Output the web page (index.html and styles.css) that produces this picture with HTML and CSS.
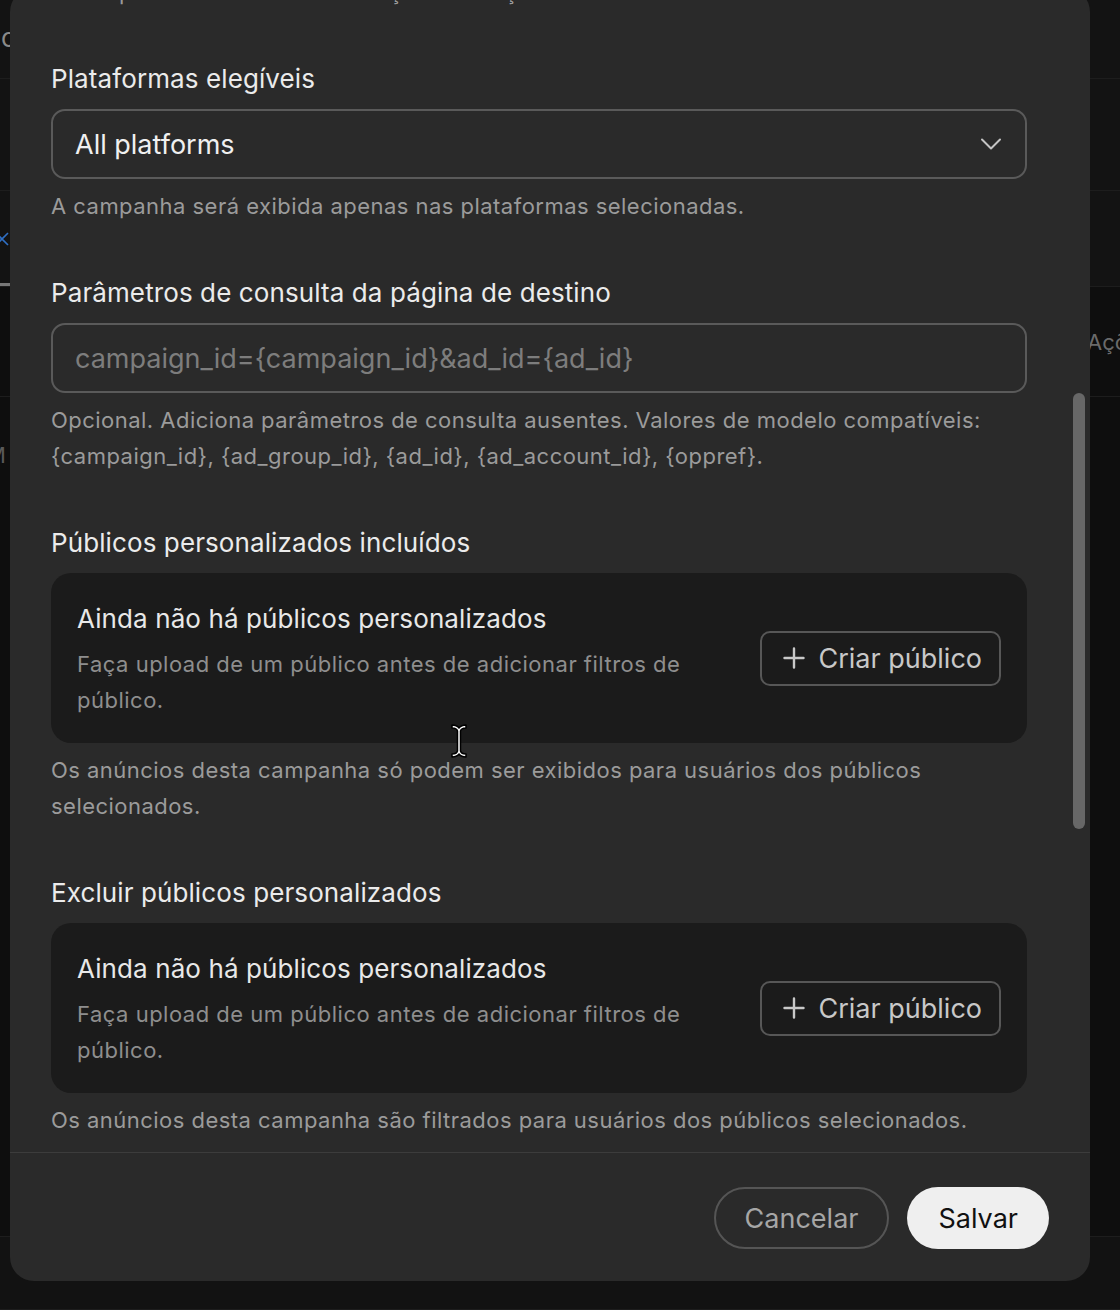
FILE: index.html
```html
<!DOCTYPE html>
<html lang="pt-BR">
<head>
<meta charset="utf-8">
<title>Editar campanha</title>
<link rel="stylesheet" href="styles.css">
</head>
<body>
<div class="page">
  <div class="bg-row bg-row-a">
    <span class="bg-text bg-left">do</span>
  </div>
  <div class="bg-row bg-row-b"></div>
  <div class="bg-row bg-row-c">
    <svg class="bg-x" width="16" height="16" viewBox="0 0 16 16"><path d="M2 2 L14 14 M14 2 L2 14" stroke="#2f6fc4" stroke-width="1.6" fill="none"/></svg>
    <span class="bg-tab"></span>
  </div>
  <div class="bg-row bg-row-d">
    <span class="bg-text bg-right">Ações</span>
  </div>
  <div class="bg-row bg-row-e">
    <span class="bg-text bg-left-m">M</span>
  </div>
  <div class="bg-row bg-row-f"></div>
</div>

<div class="modal">
  <div class="modal-body">
    <p class="help cut">A campanha tem limite de exibição e duração.</p>

    <section class="field">
      <label class="label">Plataformas elegíveis</label>
      <div class="select">
        <span class="select-value">All platforms</span>
        <svg class="chevron" width="22" height="14" viewBox="0 0 22 14"><path d="M2 2.5 L11 11.5 L20 2.5" stroke="#c4c4c4" stroke-width="2" fill="none" stroke-linecap="round" stroke-linejoin="round"/></svg>
      </div>
      <p class="help">A campanha será exibida apenas nas plataformas selecionadas.</p>
    </section>

    <section class="field">
      <label class="label">Parâmetros de consulta da página de destino</label>
      <div class="input"><span class="placeholder">campaign_id={campaign_id}&amp;ad_id={ad_id}</span></div>
      <p class="help">Opcional. Adiciona parâmetros de consulta ausentes. Valores de modelo compatíveis: {campaign_id}, {ad_group_id}, {ad_id}, {ad_account_id}, {oppref}.</p>
    </section>

    <section class="field">
      <label class="label">Públicos personalizados incluídos</label>
      <div class="card">
        <div class="card-text">
          <div class="card-title">Ainda não há públicos personalizados</div>
          <div class="card-desc">Faça upload de um público antes de adicionar filtros de público.</div>
        </div>
        <button class="btn-outline">
          <svg class="plus" width="22" height="22" viewBox="0 0 22 22"><path d="M11 1.5 V20.5 M1.5 11 H20.5" stroke="#c8c8c8" stroke-width="2.4" fill="none" stroke-linecap="round"/></svg>
          <span>Criar público</span>
        </button>
      </div>
      <p class="help">Os anúncios desta campanha só podem ser exibidos para usuários dos públicos selecionados.</p>
    </section>

    <section class="field">
      <label class="label">Excluir públicos personalizados</label>
      <div class="card">
        <div class="card-text">
          <div class="card-title">Ainda não há públicos personalizados</div>
          <div class="card-desc">Faça upload de um público antes de adicionar filtros de público.</div>
        </div>
        <button class="btn-outline">
          <svg class="plus" width="22" height="22" viewBox="0 0 22 22"><path d="M11 1.5 V20.5 M1.5 11 H20.5" stroke="#c8c8c8" stroke-width="2.4" fill="none" stroke-linecap="round"/></svg>
          <span>Criar público</span>
        </button>
      </div>
      <p class="help">Os anúncios desta campanha são filtrados para usuários dos públicos selecionados.</p>
    </section>
  </div>
  <div class="scrollbar"></div>
  <footer class="modal-footer">
    <button class="btn-cancel">Cancelar</button>
    <button class="btn-save">Salvar</button>
  </footer>
</div>

<svg class="cursor" width="18" height="36" viewBox="0 0 18 36">
  <path d="M2 2 C5 2 7.5 3 9 5 C10.5 3 13 2 16 2 V5 C13.5 5 11 6 10.5 8 V28 C11 30 13.5 31 16 31 V34 C13 34 10.5 33 9 31 C7.5 33 5 34 2 34 V31 C4.5 31 7 30 7.5 28 V8 C7 6 4.5 5 2 5 Z" fill="#ffffff" stroke="#000000" stroke-width="1.5" stroke-linejoin="round"/>
</svg>
</body>
</html>
```

FILE: styles.css
```css
* {
  box-sizing: border-box;
}

html, body {
  margin: 0;
  padding: 0;
}

body {
  width: 1120px;
  height: 1310px;
  overflow: hidden;
  background: #111111;
  font-family: "Inter", "Noto Sans", "Liberation Sans", sans-serif;
  position: relative;
}

/* ---------- background page (under the modal) ---------- */
.page {
  display: flex;
  flex-direction: column;
  height: 1310px;
  overflow: hidden;
}

.bg-row {
  display: flex;
  align-items: center;
  border-bottom: 1px solid #1d1d1d;
  position: relative;
}

.bg-row-a { height: 79px; background: #131313; align-items: flex-start; }
.bg-row-b { height: 112px; background: #131313; }
.bg-row-c { height: 96px; background: #131313; align-items: center; }
.bg-row-d { height: 110px; background: #0e0e0e; justify-content: flex-end; }
.bg-row-e { height: 840px; background: #0e0e0e; align-items: flex-start; }
.bg-row-f { flex: 1; background: #121212; }

.bg-text {
  color: #8a8a8a;
  font-size: 22px;
  white-space: nowrap;
}

.bg-left {
  margin-left: -15px;
  margin-top: 22px;
  font-size: 26px;
}

.bg-x {
  margin-left: -6px;
}

.bg-tab {
  align-self: flex-end;
  width: 10px;
  height: 3px;
  background: #777777;
  margin-left: -10px;
}

.bg-right {
  width: 33px;
  overflow: visible;
  color: #6a6a6a;
}

.bg-left-m {
  margin-left: -14px;
  margin-top: 45px;
  color: #5a5a5a;
}

/* ---------- modal ---------- */
.modal {
  position: absolute;
  left: 10px;
  top: -12px;
  width: 1080px;
  height: 1293px;
  background: #2a2a2a;
  border-radius: 24px;
  display: flex;
  flex-direction: column;
  overflow: hidden;
}

.modal-body {
  flex: 1;
  overflow: hidden;
  padding: 0 63px 0 41px;
}

.field {
  margin-top: 51px;
  display: flex;
  flex-direction: column;
}

.label {
  display: block;
  font-size: 26px;
  line-height: 36px;
  letter-spacing: 0.1px;
  color: #ebebeb;
  margin-bottom: 12px;
}

.help {
  margin: 9px 0 0 0;
  font-size: 22px;
  line-height: 36px;
  letter-spacing: 0.47px;
  color: #9b9b9b;
}

.help.cut {
  margin-top: -14px;
}

.select,
.input {
  height: 70px;
  border: 2px solid #5a5a5a;
  border-radius: 14px;
  display: flex;
  align-items: center;
  padding: 0 22px;
}

.select {
  justify-content: space-between;
}

.select-value {
  font-size: 27px;
  color: #f0f0f0;
}

.chevron {
  margin-right: 1px;
}

.placeholder {
  font-size: 27px;
  color: #7d7d7d;
}

.card {
  height: 170px;
  background: #1b1b1b;
  border-radius: 20px;
  display: flex;
  align-items: center;
  justify-content: space-between;
  padding: 0 26px;
  gap: 44px;
}

.card-text {
  flex: 1;
  align-self: flex-start;
  padding-top: 27px;
}

.card-title {
  font-size: 26px;
  line-height: 38px;
  letter-spacing: 0.1px;
  color: #e8e8e8;
  margin-bottom: 8px;
}

.card-desc {
  font-size: 22px;
  line-height: 36px;
  letter-spacing: 0.5px;
  color: #8e8e8e;
}

.btn-outline {
  height: 55px;
  border: 2px solid #575757;
  border-radius: 10px;
  background: transparent;
  display: flex;
  align-items: center;
  gap: 14px;
  padding: 0 17px 0 21px;
  font-family: inherit;
  font-size: 27px;
  color: #c8c8c8;
  cursor: pointer;
  white-space: nowrap;
}

.scrollbar {
  position: absolute;
  right: 5px;
  top: 405px;
  width: 12px;
  height: 436px;
  border-radius: 6px;
  background: #676767;
}

.modal-footer {
  border-top: 1px solid #3c3c3c;
  padding: 34px 41px 32px 41px;
  display: flex;
  justify-content: flex-end;
  gap: 18px;
}

.btn-cancel,
.btn-save {
  height: 62px;
  border-radius: 31px;
  font-family: inherit;
  font-size: 27px;
  padding: 0 29px;
  cursor: pointer;
}

.btn-cancel {
  background: transparent;
  border: 2px solid #555555;
  color: #a6a6a6;
}

.btn-save {
  background: #efefef;
  border: none;
  color: #111111;
  padding: 0 31px;
}

/* mouse cursor captured in screenshot */
.cursor {
  position: absolute;
  left: 450px;
  top: 723px;
}
```
